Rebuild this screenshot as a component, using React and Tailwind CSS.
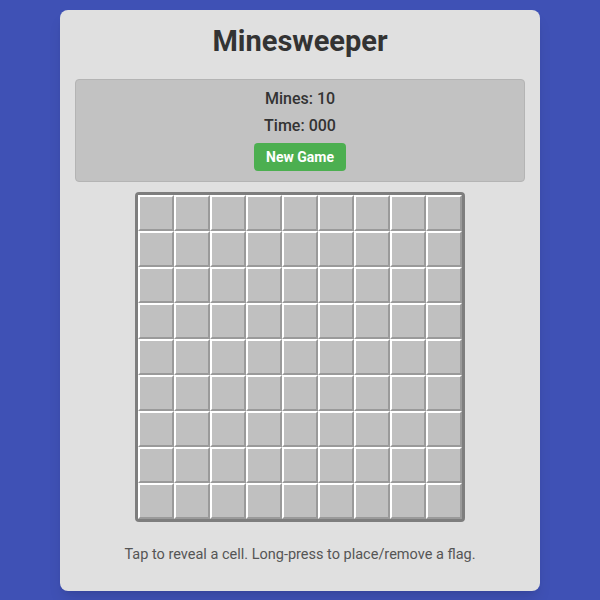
import React from "react";

const ROWS = 9;
const COLS = 9;

const Cell = () => (
  <div className="w-9 h-9 bg-[#c0c0c0] border-2 border-t-white border-l-white border-r-[#9a9a9a] border-b-[#9a9a9a]" />
);

const App = () => {
  const cells = Array.from({ length: ROWS * COLS }, (_, i) => i);

  return (
    <div
      className="w-[600px] h-[600px] bg-[#3f51b5] flex justify-center pt-[10px]"
      style={{ fontFamily: "Roboto, 'Noto Sans', sans-serif" }}
    >
      <div className="w-[480px] h-[581px] bg-[#e0e0e0] rounded-lg shadow-lg px-[15px] pt-[15px] flex flex-col items-center">
        <h1 className="text-[29px] leading-[33px] font-bold text-[#333]">Minesweeper</h1>

        <div className="mt-[21px] w-full bg-[#c2c2c2] border border-[#b4b4b4] rounded flex flex-col items-center pt-[9px] pb-[10px] text-[#333]">
          <div className="text-base leading-[19px] font-medium">Mines: 10</div>
          <div className="mt-2 text-base leading-[19px] font-medium">Time: 000</div>
          <button className="mt-2 h-7 px-3 bg-[#4caf50] text-white text-sm font-bold rounded">
            New Game
          </button>
        </div>

        <div className="mt-[10px] border-[3px] border-[#7e7e7e] rounded grid grid-cols-9">
          {cells.map((i) => (
            <Cell key={i} />
          ))}
        </div>

        <p className="mt-[23px] text-[14.5px] leading-5 text-[#555]">
          Tap to reveal a cell. Long-press to place/remove a flag.
        </p>
      </div>
    </div>
  );
};

export default App;
